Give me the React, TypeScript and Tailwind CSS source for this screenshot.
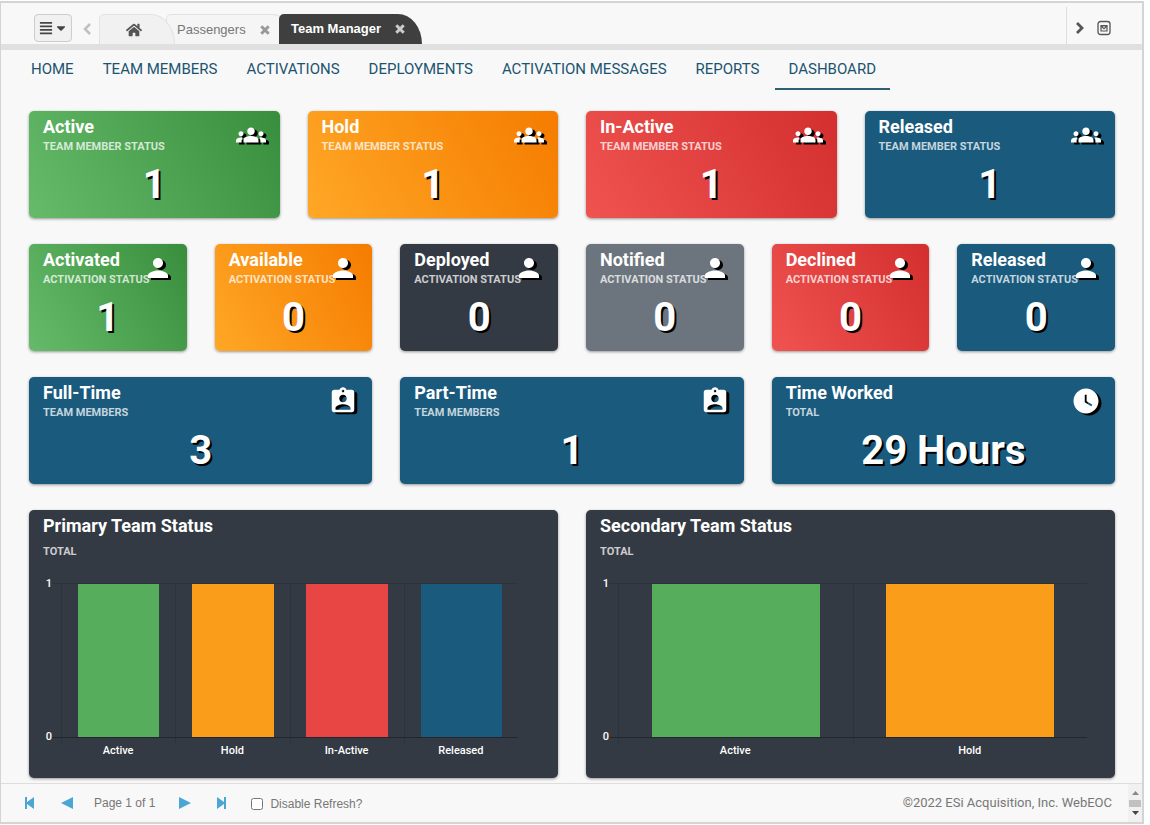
import { useState } from "react";
import clsx from "clsx";
import { FaAlignJustify, FaCaretDown, FaHome } from "react-icons/fa";
import { MdAssignmentInd, MdGroups, MdPerson, MdWatchLater } from "react-icons/md";

const green = "bg-linear-[60deg] from-[#66bb6a] to-[#388e3c]";
const orange = "bg-linear-[60deg] from-[#ffa726] to-[#f57c00]";
const red = "bg-linear-[60deg] from-[#ef5350] to-[#d32f2f]";
const blue = "bg-[#195a7d]";
const dark = "bg-[#343a43]";
const gray = "bg-[#6c757d]";

const links = ["HOME", "TEAM MEMBERS", "ACTIVATIONS", "DEPLOYMENTS", "ACTIVATION MESSAGES", "REPORTS", "DASHBOARD"];

const memberStatus = [
  { title: "Active", value: "1", color: green },
  { title: "Hold", value: "1", color: orange },
  { title: "In-Active", value: "1", color: red },
  { title: "Released", value: "1", color: blue },
];

const activationStatus = [
  { title: "Activated", value: "1", color: green },
  { title: "Available", value: "0", color: orange },
  { title: "Deployed", value: "0", color: dark },
  { title: "Notified", value: "0", color: gray },
  { title: "Declined", value: "0", color: red },
  { title: "Released", value: "0", color: blue },
];

const primaryTeam = [
  { label: "Active", value: 1, color: "bg-[#56ad5b]" },
  { label: "Hold", value: 1, color: "bg-[#f99d1b]" },
  { label: "In-Active", value: 1, color: "bg-[#e74644]" },
  { label: "Released", value: 1, color: "bg-[#195a7d]" },
];

const secondaryTeam = primaryTeam.slice(0, 2);

function CloseIcon() {
  return (
    <svg className="size-[10px]" viewBox="0 0 10 10" stroke="currentColor" strokeWidth="3">
      <path d="M1.300 1.300l7.400 7.400M8.700 1.300l-7.400 7.400" />
    </svg>
  );
}

function StatCard({ title, subtitle, value, color, icon: Icon }: any) {
  return (
    <section className={clsx("h-[107px] rounded-[5px] px-[14px] text-white shadow-[0_1px_3px_rgba(0,0,0,0.4)]", color)}>
      <div className="flex h-12 justify-between">
        <div className="min-w-0 whitespace-nowrap pt-1">
          <h2 className="text-[18px] font-bold leading-6">{title}</h2>
          <p className="text-[11px] font-bold leading-4 text-white/75">{subtitle}</p>
        </div>
        <Icon className="mt-[9px] size-[30px] shrink-0 drop-shadow-[3px_2px_0_#000]" />
      </div>
      <p className="text-center text-[40px] font-bold leading-[52px] [text-shadow:2px_2px_0_#000]">{value}</p>
    </section>
  );
}

function ChartCard({ title, data, className }: any) {
  return (
    <section className={clsx("h-[268px] rounded-[5px] pl-[14px] text-white shadow-[0_1px_3px_rgba(0,0,0,0.4)]", dark, className)}>
      <h2 className="pt-1 text-[18px] font-bold leading-6">{title}</h2>
      <p className="pt-[6px] text-[11px] font-bold leading-4 text-white/75">TOTAL</p>
      <div className="mt-4 flex text-[11px] font-medium leading-4">
        <div className="flex h-[169px] w-[9px] flex-col justify-between text-right">
          <span>1</span>
          <span>0</span>
        </div>
        <div className="mt-[7px] h-[155px] w-[9px] border-y border-t-[#2e333b] border-b-[#23272d]" />
        <div className="mt-[7px] flex flex-1">
          {data.map((bar: any) => (
            <div key={bar.label} className="flex-1">
              <div className="flex h-[155px] items-end justify-center border-y border-l border-t-[#2e333b] border-b-[#23272d] border-l-[#2e333b]">
                <div className={clsx("w-[72%]", bar.color)} style={{ height: `${bar.value * 100}%` }} />
              </div>
              <div className="h-[5px] border-l border-[#2e333b]" />
              <p className="text-center">{bar.label}</p>
            </div>
          ))}
        </div>
      </div>
    </section>
  );
}

export default function App() {
  const [current, setCurrent] = useState("DASHBOARD");
  const [disableRefresh, setDisableRefresh] = useState(false);

  return (
    <div className="min-h-screen bg-white pt-px pr-[6px] font-[Roboto,sans-serif]">
      <div className="border-2 border-l border-[#d4d4d4] bg-[#f8f8f8]">
        <header className="flex h-[47px] items-end border-b-[6px] border-[#e0e0e0] pl-[33px] font-['Liberation_Sans',sans-serif]">
          <button aria-label="Menu" className="mb-[2px] flex h-7 w-[38px] items-center justify-center gap-px rounded border border-[#ccc] bg-[#f1f1f1] text-[#444]">
            <FaAlignJustify className="size-[14px]" />
            <FaCaretDown className="size-[14px]" />
          </button>
          <button aria-label="Previous tabs" className="mb-[9px] ml-[9px] text-[#c0c0c0]">
            <svg className="size-3" viewBox="0 0 12 12" fill="none" stroke="currentColor" strokeWidth="2.500">
              <path d="M9 1L4 6l5 5" />
            </svg>
          </button>
          <div className="ml-[6px] flex">
            <button aria-label="Home" className="relative z-10 flex h-[30px] w-[76px] items-center justify-center rounded-tl-[5px] rounded-tr-[24px_30px] border border-b-0 border-[#e2e2e2] bg-[#f1f1f1] pr-[6px] text-[#555]">
              <FaHome className="size-4" />
            </button>
            <div className="-ml-[9px] flex h-[30px] w-[130px] items-center rounded-tl-[5px] rounded-tr-[24px_30px] border border-b-0 border-[#e2e2e2] bg-[#f5f5f5] pl-[10px] text-[13px] text-[#777]">
              <button>Passengers</button>
              <button aria-label="Close Passengers" className="ml-[14px] text-[#999]">
                <CloseIcon />
              </button>
            </div>
            <div className="relative z-10 -ml-[17px] flex h-[30px] w-[143px] items-center rounded-tl-[5px] rounded-tr-[24px_30px] bg-[#3f3f3f] pl-3 text-[13px] font-bold text-white">
              <button>Team Manager</button>
              <button aria-label="Close Team Manager" className="ml-[14px] text-[#ccc]">
                <CloseIcon />
              </button>
            </div>
          </div>
          <div className="ml-auto flex h-[37px] w-[76px] items-center gap-[10px] border-l border-[#ddd] pt-[5px] pl-[7px] text-[#555]">
            <button aria-label="Next tabs">
              <svg className="size-3" viewBox="0 0 12 12" fill="none" stroke="currentColor" strokeWidth="2.800">
                <path d="M3 1l5 5-5 5" />
              </svg>
            </button>
            <button aria-label="Tab list">
              <svg className="size-4" viewBox="0 0 16 16" fill="none" stroke="currentColor">
                <rect x="2" y="1.500" width="12" height="13" rx="2.500" strokeWidth="1.300" />
                <path d="M5 11V5.500h6V11z" strokeWidth="1.200" />
                <path d="M5 5h6v2L8 9.500 5 7z" fill="currentColor" stroke="none" />
                <path d="M6.500 6.500h3L8 8z" fill="#f8f8f8" stroke="none" />
              </svg>
            </button>
          </div>
        </header>

        <nav className="flex gap-px pl-4">
          {links.map((link) => (
            <a
              key={link}
              href="#"
              onClick={() => setCurrent(link)}
              className={clsx(
                "h-10 border-b-2 px-[14px] pt-[9px] text-[15px] leading-5 text-[#1b5470]",
                current === link ? "border-[#2d5f73]" : "border-transparent"
              )}
            >
              {link}
            </a>
          ))}
        </nav>

        <main className="flex flex-col gap-[26px] pt-[21px] pr-[27px] pb-[5px] pl-7">
          <div className="grid grid-cols-4 gap-7">
            {memberStatus.map((card) => (
              <StatCard key={card.title} {...card} subtitle="TEAM MEMBER STATUS" icon={MdGroups} />
            ))}
          </div>
          <div className="grid grid-cols-6 gap-7">
            {activationStatus.map((card) => (
              <StatCard key={card.title} {...card} subtitle="ACTIVATION STATUS" icon={MdPerson} />
            ))}
          </div>
          <div className="grid grid-cols-3 gap-7">
            <StatCard title="Full-Time" subtitle="TEAM MEMBERS" value="3" color={blue} icon={MdAssignmentInd} />
            <StatCard title="Part-Time" subtitle="TEAM MEMBERS" value="1" color={blue} icon={MdAssignmentInd} />
            <StatCard title="Time Worked" subtitle="TOTAL" value="29 Hours" color={blue} icon={MdWatchLater} />
          </div>
          <div className="grid grid-cols-2 gap-7">
            <ChartCard title="Primary Team Status" data={primaryTeam} className="pr-10" />
            <ChartCard title="Secondary Team Status" data={secondaryTeam} className="pr-7" />
          </div>
        </main>

        <footer className="flex h-[39px] items-center border-t border-[#ddd] pl-6 font-['Liberation_Sans',sans-serif] text-[12px] text-[#777]">
          <button aria-label="First page" className="text-[#4ba6d6]">
            <svg className="h-3 w-[10px]" viewBox="0 0 10 12" fill="currentColor">
              <path d="M0 0h2v5l7-5v12L2 7v5H0z" />
            </svg>
          </button>
          <button aria-label="Previous page" className="ml-[26px] text-[#4ba6d6]">
            <svg className="h-3 w-3" viewBox="0 0 12 12" fill="currentColor">
              <path d="M12 0v12L0 6z" />
            </svg>
          </button>
          <span className="ml-[21px]">Page 1 of 1</span>
          <button aria-label="Next page" className="ml-6 text-[#4ba6d6]">
            <svg className="h-3 w-3" viewBox="0 0 12 12" fill="currentColor">
              <path d="M0 0v12l12-6z" />
            </svg>
          </button>
          <button aria-label="Last page" className="ml-[26px] text-[#4ba6d6]">
            <svg className="h-3 w-[10px]" viewBox="0 0 10 12" fill="currentColor">
              <path d="M9 0H7v5L0 0v12l7-5v5h2z" />
            </svg>
          </button>
          <label className="ml-6 flex items-center gap-[7px] pt-[2px]">
            <input
              type="checkbox"
              checked={disableRefresh}
              onChange={(e) => setDisableRefresh(e.target.checked)}
              className="size-3"
            />
            Disable Refresh?
          </label>
          <span className="ml-auto font-[Roboto,sans-serif] text-[13px]">©2022 ESi Acquisition, Inc. WebEOC</span>
          <div className="ml-4 flex h-full w-[14px] flex-col items-center justify-between bg-[#f1f1f1] py-[7px]">
            <svg className="h-1 w-[7px]" viewBox="0 0 7 4" fill="#888">
              <path d="M0 4l3.500-4L7 4z" />
            </svg>
            <div className="h-[7px] w-3 bg-[#c1c1c1]" />
            <svg className="h-1 w-[7px]" viewBox="0 0 7 4" fill="#444">
              <path d="M0 0l3.500 4L7 0z" />
            </svg>
          </div>
        </footer>
      </div>
    </div>
  );
}
